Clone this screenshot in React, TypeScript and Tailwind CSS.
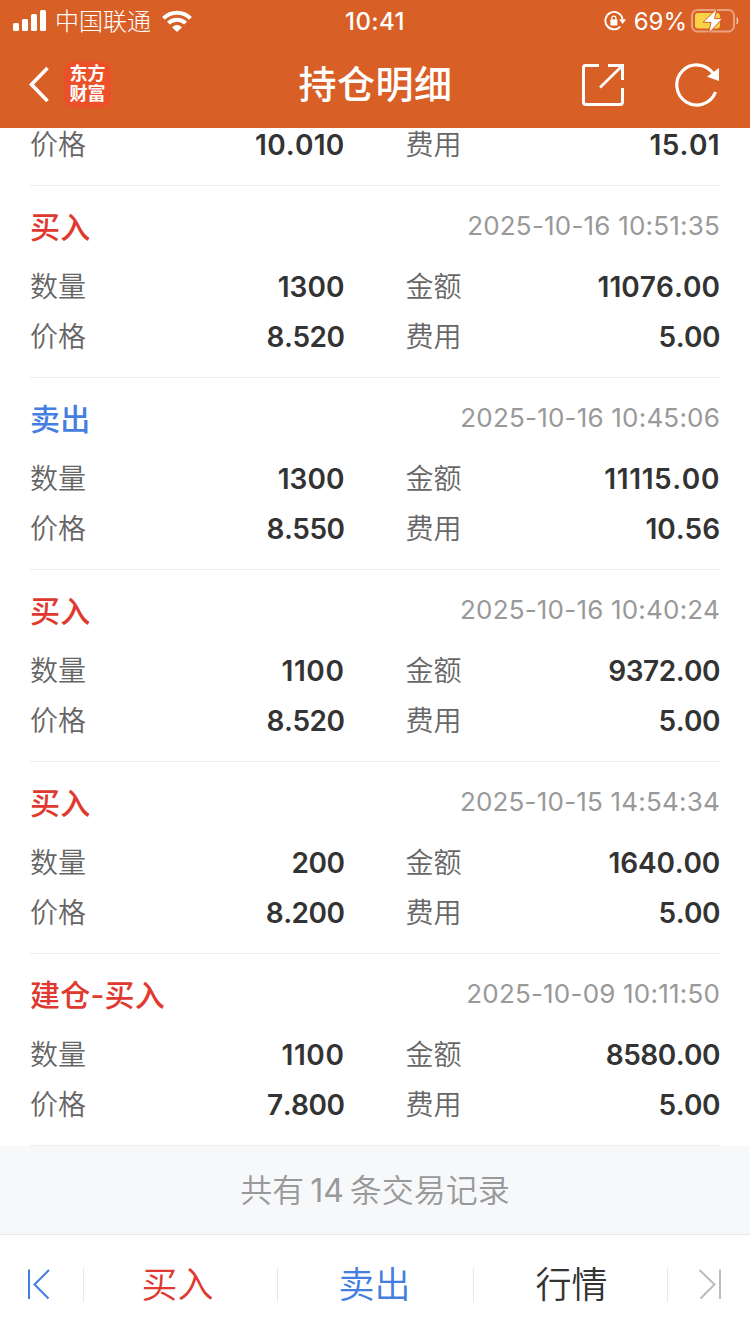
type Side = "buy" | "sell";

interface Trade {
  title: string;
  side: Side;
  time: string;
  qty: string;
  amount: string;
  price: string;
  fee: string;
}

const trades: Trade[] = [
  { title: "买入", side: "buy", time: "2025-10-16 10:51:35", qty: "1300", amount: "11076.00", price: "8.520", fee: "5.00" },
  { title: "卖出", side: "sell", time: "2025-10-16 10:45:06", qty: "1300", amount: "11115.00", price: "8.550", fee: "10.56" },
  { title: "买入", side: "buy", time: "2025-10-16 10:40:24", qty: "1100", amount: "9372.00", price: "8.520", fee: "5.00" },
  { title: "买入", side: "buy", time: "2025-10-15 14:54:34", qty: "200", amount: "1640.00", price: "8.200", fee: "5.00" },
  { title: "建仓-买入", side: "buy", time: "2025-10-09 10:11:50", qty: "1100", amount: "8580.00", price: "7.800", fee: "5.00" },
];

// The figure 1 is narrow in Inter, so values with many of them get looser tracking.
function trackingFor(value: string) {
  const ones = value.split("1").length - 1;
  return -0.5 + (2.2 * ones) / value.length;
}

function Pair({ label, value }: { label: string; value: string }) {
  return (
    <div className="flex h-[50px] items-center justify-between">
      <span className="pt-0.5 text-[28px] leading-[50px] font-[350] text-[#666]">{label}</span>
      <span
        className="pt-0.5 text-[28px] leading-[50px] font-semibold text-[#333] [font-kerning:none]"
        style={{ letterSpacing: trackingFor(value) }}
      >
        {value}
      </span>
    </div>
  );
}

function Row({ left, right }: { left: [string, string]; right: [string, string] }) {
  return (
    <div className="grid grid-cols-2 gap-x-[61px]">
      <Pair label={left[0]} value={left[1]} />
      <Pair label={right[0]} value={right[1]} />
    </div>
  );
}

function TradeItem({ trade }: { trade: Trade }) {
  return (
    <article className="border-b border-[#ececec] pt-[10px] pb-4">
      <div className="mb-[5px] flex h-[60px] items-center justify-between">
        <h2
          className={
            trade.side === "buy"
              ? "pt-0.5 text-[30px] leading-[60px] font-medium tracking-[0.2px] text-[#e0392f]"
              : "pt-0.5 text-[30px] leading-[60px] font-medium tracking-[0.2px] text-[#437ee0]"
          }
        >
          {trade.title}
        </h2>
        <time className="text-[26px] leading-[60px] tracking-[0.2px] text-[#999]">{trade.time}</time>
      </div>
      <Row left={["数量", trade.qty]} right={["金额", trade.amount]} />
      <Row left={["价格", trade.price]} right={["费用", trade.fee]} />
    </article>
  );
}

function StatusBar() {
  return (
    <div className="grid h-10 grid-cols-3 items-center">
      <div className="flex items-center pl-[13px]">
        <svg width="34" height="22" viewBox="0 0 34 22" fill="#fff">
          <rect x="0" y="13" width="6" height="8" rx="1.5" />
          <rect x="9" y="9" width="6" height="12" rx="1.5" />
          <rect x="18" y="4" width="6" height="17" rx="1.5" />
          <rect x="27" y="0" width="6" height="21" rx="1.5" />
        </svg>
        <span className="ml-2 pt-0.5 text-[24px] leading-10 font-light">中国联通</span>
        <svg className="ml-[11px]" width="30" height="22" viewBox="0 0 30 22" fill="none" stroke="#fff" strokeWidth="4">
          <path d="M1.5 8.4A19.2 19.2 0 0 1 28.5 8.4" />
          <path d="M6.4 13.2A12.2 12.2 0 0 1 23.6 13.2" />
          <path d="M10 17.2Q15 12.8 20 17.2L15 22Z" fill="#fff" stroke="none" />
        </svg>
      </div>
      <div className="pt-0.5 text-center text-[24px] leading-10 font-medium tracking-[0.4px]">10:41</div>
      <div className="flex items-center justify-end pr-[11px]">
        <svg width="22" height="22" viewBox="0 0 22 22" fill="none">
          <path d="M16.4 16.6A8.7 8.7 0 1 1 18.6 9" stroke="#fff" strokeWidth="1.9" />
          <path d="M15.2 9.3H22L18.6 14Z" fill="#fff" />
          <rect x="6.4" y="9.5" width="7" height="6" rx="0.8" fill="#fff" />
          <path d="M7.9 10V8.2A2 2 0 0 1 11.9 8.2V10" stroke="#fff" strokeWidth="1.3" />
        </svg>
        <span className="ml-2 pt-0.5 text-[24px] leading-10">69%</span>
        <svg className="ml-1" width="48" height="24" viewBox="0 0 48 24" fill="none">
          <rect x="1" y="1" width="42" height="21.5" rx="5.5" stroke="#fff" strokeOpacity="0.42" strokeWidth="2" />
          <path d="M46 8.5Q48 11.8 46 15Z" fill="#fff" fillOpacity="0.45" stroke="#fff" strokeOpacity="0.45" />
          <rect x="4" y="4" width="25" height="15.5" rx="3" fill="#f8d347" />
          <path d="M26 -0.5L12 13.4H20L17.5 24.5L31.5 9.6H23.5Z" fill="#fff" stroke="#d86027" strokeWidth="1" />
        </svg>
      </div>
    </div>
  );
}

function Header() {
  return (
    <header className="h-32 shrink-0 bg-[#d86027] text-white">
      <StatusBar />
      <div className="grid h-[88px] grid-cols-[1fr_auto_1fr] items-center">
        <div className="flex items-center pl-[29px]">
          <svg width="21" height="36" viewBox="0 0 21 36" fill="none" stroke="#fff" strokeWidth="3.6">
            <path d="M18.5 2L2.5 18.5L18.5 35" />
          </svg>
          <div className="ml-[14px] flex h-[47px] w-[47px] flex-col items-center justify-center rounded-[10px] bg-[#eb5128] text-[18px] leading-[20px] font-bold">
            <span>东方</span>
            <span>财富</span>
          </div>
        </div>
        <h1 className="pl-px text-[38px] leading-[88px] font-medium tracking-[0.5px]">持仓明细</h1>
        <div className="flex items-center justify-end pr-[30px]">
          <svg width="44" height="44" viewBox="0 0 44 44" fill="none" stroke="#fff" strokeWidth="3">
            <path d="M19 3.5H5.5Q3.5 3.5 3.5 5.5V40Q3.5 42.5 6 42.5H40Q42.5 42.5 42.5 40V26" />
            <path d="M28 3.5H42.5V18" />
            <path d="M20 25.5L42 4" strokeWidth="2.6" />
          </svg>
          <svg className="ml-[50px]" width="46" height="46" viewBox="0 0 46 46" fill="none">
            <path d="M41.5 31A20 20 0 1 1 39.5 13" stroke="#fff" strokeWidth="3.2" />
            <path d="M45 7V20L33 15.8Z" fill="#fff" />
          </svg>
        </div>
      </div>
    </header>
  );
}

function BottomBar() {
  return (
    <nav className="flex h-[100px] shrink-0 items-center border-t border-[#e9e9ec] bg-white text-[36px] font-[350]">
      <button className="flex w-[83px] items-center pl-[26px]" aria-label="上一条">
        <svg width="24" height="32" viewBox="0 0 24 32" fill="none" stroke="#437ee0" strokeWidth="2">
          <path d="M3 0.5V30M23 1L8.5 15.5L22.5 29.5" />
        </svg>
      </button>
      <button className="h-[34px] w-[194px] border-l border-[#e8e8e8] pr-1.5 leading-[34px] text-[#e0392f]">买入</button>
      <button className="h-[34px] w-[196px] border-l border-[#e8e8e8] pr-0.5 leading-[34px] text-[#437ee0]">卖出</button>
      <button className="h-[34px] w-[194px] border-l border-[#e8e8e8] pl-0.5 leading-[34px] text-[#333]">行情</button>
      <button className="flex h-[34px] flex-1 items-center justify-end border-l border-[#e8e8e8] pr-[28px]" aria-label="下一条">
        <svg width="24" height="32" viewBox="0 0 24 32" fill="none" stroke="#bbb" strokeWidth="2">
          <path d="M22 0.5V30M1.5 1L16.5 15.5L2.5 29.5" />
        </svg>
      </button>
    </nav>
  );
}

export default function App() {
  return (
    <div className="flex h-[1334px] w-[750px] flex-col overflow-hidden bg-white font-['Inter','Noto_Sans_CJK_SC',sans-serif]">
      <Header />
      <main className="h-[1018px] shrink-0 overflow-hidden px-[30px]">
        <div className="-mt-[9px] border-b border-[#ececec] pb-4">
          <Row left={["价格", "10.010"]} right={["费用", "15.01"]} />
        </div>
        {trades.map((t) => (
          <TradeItem key={t.time} trade={t} />
        ))}
      </main>
      <div className="h-[88px] shrink-0 bg-[#f7f8fa] pt-px text-center text-[32px] leading-[88px] font-[350] text-[#999]">
        共有<span className="mx-1.5 font-normal">14</span>条交易记录
      </div>
      <BottomBar />
    </div>
  );
}
